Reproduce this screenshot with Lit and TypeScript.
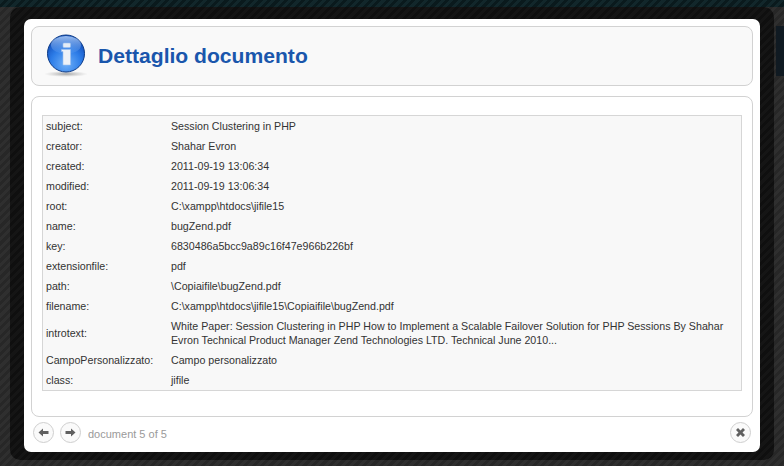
import { LitElement, html, css, svg } from "lit";
import { customElement } from "lit/decorators.js";

const ROWS: [string, string][] = [
  ["subject:", "Session Clustering in PHP"],
  ["creator:", "Shahar Evron"],
  ["created:", "2011-09-19 13:06:34"],
  ["modified:", "2011-09-19 13:06:34"],
  ["root:", "C:\\xampp\\htdocs\\jifile15"],
  ["name:", "bugZend.pdf"],
  ["key:", "6830486a5bcc9a89c16f47e966b226bf"],
  ["extensionfile:", "pdf"],
  ["path:", "\\Copiaifile\\bugZend.pdf"],
  ["filename:", "C:\\xampp\\htdocs\\jifile15\\Copiaifile\\bugZend.pdf"],
  ["introtext:", "White Paper: Session Clustering in PHP How to Implement a Scalable Failover Solution for PHP Sessions By Shahar Evron Technical Product Manager Zend Technologies LTD. Technical June 2010..."],
  ["CampoPersonalizzato:", "Campo personalizzato"],
  ["class:", "jifile"],
];

const infoIcon = svg`<svg class="icon" viewBox="0 0 46 46" width="46" height="46" aria-hidden="true">
  <defs>
    <radialGradient id="ball" cx="50%" cy="78%" r="68%">
      <stop offset="0" stop-color="#6fb0f8"/><stop offset=".6" stop-color="#2d7de8"/><stop offset="1" stop-color="#1553c0"/>
    </radialGradient>
    <linearGradient id="gloss" x1="0" y1="0" x2="0" y2="1">
      <stop offset="0" stop-color="#bcd8fb" stop-opacity=".8"/><stop offset="1" stop-color="#6ea6f0" stop-opacity=".15"/>
    </linearGradient>
    <radialGradient id="shade"><stop offset="0" stop-color="#888" stop-opacity=".75"/><stop offset="1" stop-color="#aaa" stop-opacity="0"/></radialGradient>
  </defs>
  <ellipse cx="22" cy="41" rx="22" ry="3" fill="url(#shade)"/>
  <circle cx="22" cy="20.500" r="18.500" fill="url(#ball)" stroke="#0c3a86" stroke-width="1"/>
  <ellipse cx="22" cy="12" rx="15" ry="9" fill="url(#gloss)"/>
  <rect x="19" y="10" width="7.500" height="4.500" rx="1" fill="#e4ecf5" stroke="#9cc0ee" stroke-width=".6"/>
  <path d="M17.500 16.500h9v15.500h-7.500V18.500h-1.500z" fill="#eef2f7" stroke="#9cc0ee" stroke-width=".6"/>
</svg>`;

const arrow = (d: string) => svg`<svg viewBox="0 0 19 19" width="19" height="19" aria-hidden="true"><path d=${d} fill="#606060"/></svg>`;

@customElement("app-root")
export class AppRoot extends LitElement {
  static styles = css`
    :host {
      display: block;
      width: 784px;
      height: 466px;
      overflow: hidden;
      font-family: "Liberation Sans", Arial, sans-serif;
      background:
        linear-gradient(#101a22, #101a22) 776px 26px / 8px 50px no-repeat,
        repeating-linear-gradient(135deg, #2f2f2f 0 3px, #272727 3px 6px);
    }
    .top {
      height: 7px;
      background: repeating-linear-gradient(135deg, #12272b 0 3px, #0a1a1d 3px 6px);
    }
    .ring {
      margin-left: 10px;
      width: 764px;
      height: 453px;
      box-sizing: border-box;
      padding: 12px 14px 8px;
      border-radius: 10px;
      background: repeating-linear-gradient(135deg, #151515 0 3px, #0f0f0f 3px 6px);
    }
    .modal {
      width: 736px;
      height: 433px;
      box-sizing: border-box;
      background: #fff;
      border-radius: 7px;
      padding: 7px;
      display: flex;
      flex-direction: column;
    }
    .head {
      height: 60px;
      box-sizing: border-box;
      border: 1px solid #d2d2d2;
      border-radius: 8px;
      background: #f9f9f9;
      display: flex;
      align-items: center;
      padding: 0 0 0 12px;
      gap: 8px;
    }
    .icon { flex: none; }
    h1 {
      margin: 0;
      font-size: 21.100px;
      line-height: 26px;
      font-weight: bold;
      color: #1a56ac;
    }
    .panel {
      margin-top: 10px;
      height: 321px;
      box-sizing: border-box;
      border: 1px solid #d2d2d2;
      border-radius: 8px;
      padding: 18px 10px 0;
    }
    .table {
      border: 1px solid #d6d6d6;
      background: #f8f8f8;
      display: grid;
      grid-template-columns: 128px 1fr;
      font-size: 10.667px;
      color: #333;
    }
    .k, .v {
      display: flex;
      align-items: center;
      box-sizing: border-box;
      min-height: 20px;
      line-height: 14px;
    }
    .k { padding-left: 3px; }
    .v { padding-right: 10px; }
    .k.tall, .v.tall { padding-top: 3px; padding-bottom: 3px; }
    .foot {
      flex: 1;
      display: flex;
      align-items: center;
      gap: 6px;
      padding: 2px 2px 0;
    }
    .btn {
      width: 19px;
      height: 19px;
      border: 1px solid #cfcfcf;
      border-radius: 50%;
      background: #fafafa;
      padding: 0;
      display: grid;
      place-items: center;
      box-sizing: content-box;
    }
    .count {
      margin-left: 1px;
      padding-top: 4px;
      font-size: 11px;
      color: #9a9a9a;
    }
    .close { margin-left: auto; }
  `;

  render() {
    return html`
      <div class="top"></div>
      <div class="ring">
        <div class="modal">
          <div class="head">
            ${infoIcon}
            <h1>Dettaglio documento</h1>
          </div>
          <div class="panel">
            <div class="table">
              ${ROWS.map(([k, v]) => {
                const tall = k === "introtext:" ? "tall" : "";
                return html`<div class="k ${tall}">${k}</div><div class="v ${tall}">${v}</div>`;
              })}
            </div>
          </div>
          <div class="foot">
            <button class="btn" aria-label="Precedente">${arrow("M4.500 9.500l4.500-4v2.500h5.500v3H9v2.500z")}</button>
            <button class="btn" aria-label="Successivo">${arrow("M14.500 9.500l-4.500-4v2.500H4.500v3H10v2.500z")}</button>
            <span class="count">document 5 of 5</span>
            <button class="btn close" aria-label="Chiudi">${arrow("M7 5l2.500 2.500L12 5l2 2-2.500 2.500L14 12l-2 2-2.500-2.500L7 14l-2-2 2.500-2.500L5 7z")}</button>
          </div>
        </div>
      </div>
    `;
  }
}
